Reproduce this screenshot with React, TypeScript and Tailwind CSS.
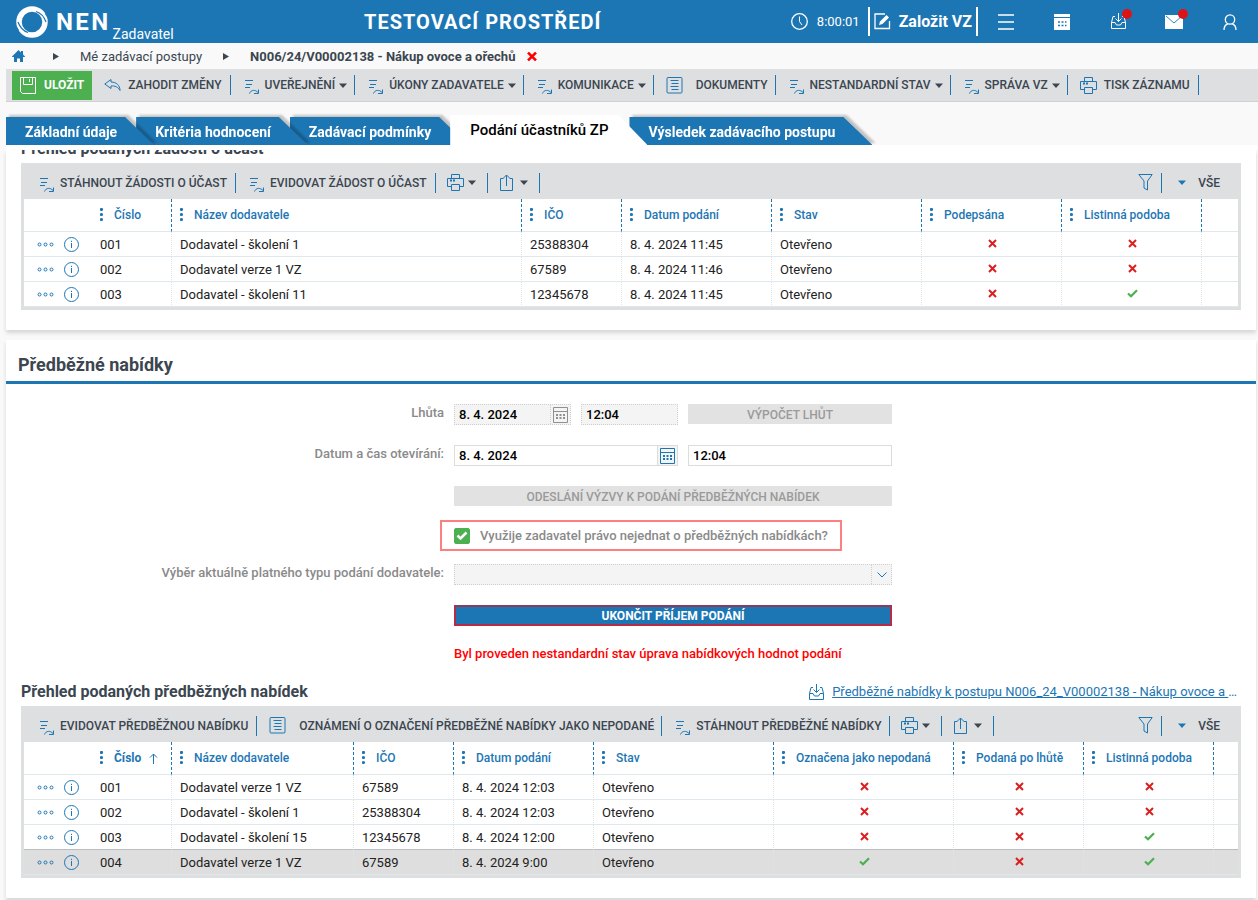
import { useState, type ReactNode } from "react";
import clsx from "clsx";

/* ---------- ICONS ---------- */

function Logo() {
  return (
    <svg width="32" height="32" viewBox="0 0 32 32" aria-hidden="true">
      <circle cx="16" cy="16" r="13" fill="none" stroke="#fff" strokeWidth="5.500" />
      <path d="M20 5.500C25 7 28 10.500 30 16M12 26.500C7 25 4 21.500 2 16" fill="none" stroke="#1d76b4" strokeWidth="1.200" />
      <path d="M28.500 4.500L32.500 13L29.500 9ZM3.500 27.500L-0.500 19L2.500 23Z" fill="#1d76b4" />
    </svg>
  );
}

function ActionIcon() {
  return (
    <svg width="14" height="18" viewBox="0 0 14 18" fill="none" stroke="#1d76b4" className="shrink-0" aria-hidden="true">
      <path d="M0 4.500H8M1 8.500H7M0 11.500H5" />
      <path d="M4.500 17.500C6 13.500 10.500 13.500 13 16.500M13.500 13.500V17.500H9" />
    </svg>
  );
}

function ListIcon() {
  return (
    <svg width="17" height="17" viewBox="0 0 17 17" fill="none" stroke="#1d76b4" className="shrink-0" aria-hidden="true">
      <rect x="1" y="0.500" width="15" height="15.500" rx="1" />
      <path d="M4.500 3.500H12.500M5.500 6.500H12.500M4.500 9.500H12.500M5.500 12.500H12.500" />
    </svg>
  );
}

function PrinterIcon() {
  return (
    <svg width="17" height="17" viewBox="0 0 17 17" fill="none" stroke="#1d76b4" className="shrink-0" aria-hidden="true">
      <path d="M4.500 4.500V0.500H12.500V4.500M4.500 12.500H0.500V4.500H16.500V12.500H12.500M4.500 10.500H12.500V16.500H4.500Z" />
      <path d="M3 6.500H5M6 6.500H8" strokeWidth="2" />
    </svg>
  );
}

function ShareIcon() {
  return (
    <svg width="15" height="17" viewBox="0 0 15 17" fill="none" stroke="#1d76b4" className="shrink-0" aria-hidden="true">
      <path d="M4.500 4.500H1.500V16.500H13.500V4.500H10.500M7.500 12V1M4.500 4L7.500 1L10.500 4" />
    </svg>
  );
}

function UndoIcon() {
  return (
    <svg width="17" height="14" viewBox="0 0 17 14" fill="none" stroke="#1d76b4" strokeLinejoin="round" className="shrink-0" aria-hidden="true">
      <path d="M7 1.500L0.800 6L7 10.500V8C11 7.500 14 9 16 12.500C16 7.500 12.500 4 7 4Z" />
    </svg>
  );
}

function SaveIcon() {
  return (
    <svg width="18" height="17" viewBox="0 0 18 17" fill="none" stroke="#fff" className="shrink-0" aria-hidden="true">
      <path d="M1.500 0.500H16.500V16.500H3.500L1.500 14.500ZM4.500 0.500V7.500H13.500V0.500" />
      <path d="M10.500 2V5M4.500 0.500H13.500" />
    </svg>
  );
}

function FunnelIcon() {
  return (
    <svg width="15" height="17" viewBox="0 0 15 17" fill="none" stroke="#1d76b4" aria-hidden="true">
      <path d="M0.800 0.500H14.200L9.500 7V16L6 14V7Z" />
    </svg>
  );
}

function Caret({ blue }: { blue?: boolean }) {
  return (
    <svg width="8" height="5" viewBox="0 0 8 5" fill={blue ? "#1d76b4" : "#3b4650"} className="shrink-0" aria-hidden="true">
      <path d="M0 0.500H8L4 5Z" />
    </svg>
  );
}

function InboxIcon() {
  return (
    <svg width="17" height="17" viewBox="0 0 17 17" fill="none" stroke="currentColor" className="shrink-0" aria-hidden="true">
      <path d="M5 3.500H3L1.500 9.500M12 3.500H14L15.500 9.500M1.500 9.500H5L6.500 12H10.500L12 9.500H15.500V15.500H1.500ZM8.500 0V8.500M5.500 5.500L8.500 8.500L11.500 5.500" />
    </svg>
  );
}

function CalendarIcon() {
  return (
    <svg width="15" height="16" viewBox="0 0 15 16" fill="none" stroke="currentColor" aria-hidden="true">
      <path d="M0.500 0.500H14.500V15.500H0.500ZM0.500 4.500H14.500" />
      <path d="M3 8H5M6.500 8H8.500M10 8H12M3 11H5M6.500 11H8.500M10 11H12" strokeWidth="2" />
    </svg>
  );
}

function Cross() {
  return (
    <svg width="9" height="9" viewBox="0 0 9 9" fill="none" stroke="#d9201f" strokeWidth="2" className="mx-auto mb-[2px]" role="img" aria-label="Ne">
      <path d="M1 1L8 8M8 1L1 8" />
    </svg>
  );
}

function Check() {
  return (
    <svg width="11" height="9" viewBox="0 0 11 9" fill="none" stroke="#4caf50" strokeWidth="2.200" className="mx-auto mb-[2px]" role="img" aria-label="Ano">
      <path d="M1 4.500L4 7.300L10 1.300" />
    </svg>
  );
}

/* ---------- TOOLBAR ---------- */

type ActionKind = "action" | "list" | "print" | "undo";

function ToolbarItem({ kind, label, menu }: { kind: ActionKind; label: string; menu?: boolean }) {
  return (
    <button
      type="button"
      className={clsx(
        "flex h-5 shrink-0 items-center whitespace-nowrap border-r border-[#1d76b4] text-xs font-medium text-[#3b4650]",
        menu || kind === "list" ? "pr-[7px]" : "pr-2",
        kind === "action" ? "gap-[6px] pl-[14px]" : "pl-3",
        kind === "list" && "gap-[13px]",
        (kind === "print" || kind === "undo") && "gap-[7px]"
      )}
    >
      {kind === "action" && <ActionIcon />}
      {kind === "list" && <ListIcon />}
      {kind === "print" && <PrinterIcon />}
      {kind === "undo" && <UndoIcon />}
      <span className="flex items-center gap-1">
        {label}
        {menu && <Caret />}
      </span>
    </button>
  );
}

function IconMenu({ label, children }: { label: string; children: ReactNode }) {
  return (
    <button
      type="button"
      aria-label={label}
      className="flex h-5 w-[52px] shrink-0 items-center justify-between border-r border-[#1d76b4] pr-[11px] pl-[11px]"
    >
      {children}
      <Caret />
    </button>
  );
}

/* ---------- DATA GRID ---------- */

type Column = { title: string; width: string; sorted?: boolean };
type Row = { cells: (string | boolean)[]; selected?: boolean };

function GridToolbar({ items }: { items: { kind: ActionKind; label: string }[] }) {
  return (
    <div className="flex h-9 items-center justify-between pt-[3px] pr-[18px] pl-[2px]">
      <div className="flex items-center">
        {items.map((item) => (
          <ToolbarItem key={item.label} {...item} />
        ))}
        <IconMenu label="Tisk">
          <PrinterIcon />
        </IconMenu>
        <IconMenu label="Export">
          <ShareIcon />
        </IconMenu>
      </div>
      <div className="flex items-center">
        <button type="button" aria-label="Filtr" className="flex h-5 items-center border-r border-[#1d76b4] pr-2">
          <FunnelIcon />
        </button>
        <button type="button" className="flex items-center gap-3 pl-4 text-xs font-medium text-[#3b4650]">
          <Caret blue />
          VŠE
        </button>
      </div>
    </div>
  );
}

function DataGrid({ columns, rows }: { columns: Column[]; rows: Row[] }) {
  return (
    <table className="w-full table-fixed border-separate border-spacing-0 bg-white text-[13px] leading-4">
      <colgroup>
        <col className="w-[68px]" />
        {columns.map((c) => (
          <col key={c.title} className={c.width} />
        ))}
        <col />
      </colgroup>
      <thead>
        <tr className="h-[33px]">
          <th className="border-b border-[#dfe8ed] p-0" />
          {columns.map((c) => (
            <th
              key={c.title}
              scope="col"
              className="border-r border-b border-r-[#1d76b4] border-b-[#dfe8ed] p-0 pl-2 text-left text-xs font-medium text-[#1d76b4] [border-right-style:dashed]"
            >
              <span className="flex items-center gap-[10px] whitespace-nowrap">
                <svg width="4" height="14" viewBox="0 0 4 14" fill="#1d76b4" className="shrink-0" aria-hidden="true">
                  <circle cx="1.500" cy="1.500" r="1.600" />
                  <circle cx="1.500" cy="6.500" r="1.600" />
                  <circle cx="1.500" cy="11.500" r="1.600" />
                </svg>
                <span className={clsx("flex items-center gap-2", c.sorted && "font-bold")}>
                  {c.title}
                  {c.sorted && (
                    <svg width="9" height="11" viewBox="0 0 9 11" fill="none" stroke="#1d76b4" aria-hidden="true">
                      <path d="M4.500 11V1M1 4.500L4.500 1L8 4.500" />
                    </svg>
                  )}
                </span>
              </span>
            </th>
          ))}
          <th className="border-b border-[#dfe8ed] p-0" />
        </tr>
      </thead>
      <tbody>
        {rows.map((row, i) => (
          <tr key={i} className={clsx("h-[25px] text-[#222]", row.selected && "bg-[#dedede]")}>
            <td className={clsx("border-b p-0 pl-[13px]", rows[i + 1]?.selected ? "border-[#b9bdc0]" : "border-[#dfe8ed]")}>
              <span className="flex items-center gap-[10px]">
                <button type="button" aria-label="Další akce">
                  <svg width="17" height="5" viewBox="0 0 17 5" fill="none" stroke="#1d76b4">
                    <circle cx="2.500" cy="2.500" r="1.500" />
                    <circle cx="8.500" cy="2.500" r="1.500" />
                    <circle cx="14.500" cy="2.500" r="1.500" />
                  </svg>
                </button>
                <button type="button" aria-label="Detail">
                  <svg width="15" height="15" viewBox="0 0 15 15" fill="none" stroke="#1d76b4">
                    <circle cx="7.500" cy="7.500" r="7" />
                    <path d="M7.500 6V11M7.500 3.800V5" />
                  </svg>
                </button>
              </span>
            </td>
            {row.cells.map((cell, j) => (
              <td
                key={j}
                className={clsx(
                  "border-r border-b p-0 border-r-[#e0e4e7] [border-right-style:dotted]",
                  rows[i + 1]?.selected ? "border-b-[#b9bdc0]" : "border-b-[#dfe8ed]",
                  typeof cell === "string" ? "truncate pt-[2px] pl-2" : "pl-[2px]"
                )}
              >
                {typeof cell === "string" ? cell : cell ? <Check /> : <Cross />}
              </td>
            ))}
            <td className={clsx("border-b p-0", rows[i + 1]?.selected ? "border-[#b9bdc0]" : "border-[#dfe8ed]")} />
          </tr>
        ))}
      </tbody>
    </table>
  );
}

const REQUEST_COLUMNS: Column[] = [
  { title: "Číslo", width: "w-[80px]" },
  { title: "Název dodavatele", width: "w-[350px]" },
  { title: "IČO", width: "w-[100px]" },
  { title: "Datum podání", width: "w-[150px]" },
  { title: "Stav", width: "w-[150px]" },
  { title: "Podepsána", width: "w-[140px]" },
  { title: "Listinná podoba", width: "w-[140px]" },
];

const REQUEST_ROWS: Row[] = [
  { cells: ["001", "Dodavatel - školení 1", "25388304", "8. 4. 2024 11:45", "Otevřeno", false, false] },
  { cells: ["002", "Dodavatel verze 1 VZ", "67589", "8. 4. 2024 11:46", "Otevřeno", false, false] },
  { cells: ["003", "Dodavatel - školení 11", "12345678", "8. 4. 2024 11:45", "Otevřeno", false, true] },
];

const OFFER_COLUMNS: Column[] = [
  { title: "Číslo", width: "w-[80px]", sorted: true },
  { title: "Název dodavatele", width: "w-[182px]" },
  { title: "IČO", width: "w-[100px]" },
  { title: "Datum podání", width: "w-[140px]" },
  { title: "Stav", width: "w-[180px]" },
  { title: "Označena jako nepodaná", width: "w-[180px]" },
  { title: "Podaná po lhůtě", width: "w-[130px]" },
  { title: "Listinná podoba", width: "w-[130px]" },
];

const OFFER_ROWS: Row[] = [
  { cells: ["001", "Dodavatel verze 1 VZ", "67589", "8. 4. 2024 12:03", "Otevřeno", false, false, false] },
  { cells: ["002", "Dodavatel - školení 1", "25388304", "8. 4. 2024 12:03", "Otevřeno", false, false, false] },
  { cells: ["003", "Dodavatel - školení 15", "12345678", "8. 4. 2024 12:00", "Otevřeno", false, false, true] },
  { cells: ["004", "Dodavatel verze 1 VZ", "67589", "8. 4. 2024 9:00", "Otevřeno", true, false, true], selected: true },
];

/* ---------- HEADER ---------- */

function Header() {
  return (
    <header className="flex h-[43px] items-center justify-between bg-[#1d76b4] pl-4 text-white">
      <a href="#" className="flex h-full w-[348px] items-center">
        <Logo />
        <span className="pl-2 text-2xl font-bold tracking-widest">NEN</span>
        <span className="self-end pb-px pl-[2px] text-sm leading-4">Zadavatel</span>
      </a>
      <h1 className="grow text-xl font-bold tracking-wider whitespace-nowrap">TESTOVACÍ PROSTŘEDÍ</h1>
      <div className="flex items-center">
        <span className="flex items-center gap-[9px] pr-2 text-[13px]">
          <svg width="17" height="17" viewBox="0 0 17 17" fill="none" stroke="#fff" aria-hidden="true">
            <circle cx="8.500" cy="8.500" r="7.800" strokeWidth="1.300" />
            <path d="M8.500 3.500V8.500L11 12" />
          </svg>
          8:00:01
        </span>
        <button type="button" className="flex h-[29px] items-center gap-2 border-x-2 border-white px-1 text-base font-bold">
          <svg width="17" height="17" viewBox="0 0 17 17" fill="none" stroke="#fff" aria-hidden="true">
            <path d="M11 1H1V15.500H15.500V8" strokeWidth="1.300" />
            <path d="M5 12L6 8.500L12.500 2L15 4.500L8.500 11Z" fill="#fff" stroke="none" />
          </svg>
          Založit VZ
        </button>
        <button type="button" aria-label="Menu" className="flex w-14 justify-center">
          <svg width="16" height="16" viewBox="0 0 16 16" fill="none" stroke="#fff" strokeWidth="1.600">
            <path d="M0 1H16M0 8H16M0 15H16" />
          </svg>
        </button>
        <button type="button" aria-label="Kalendář" className="flex w-14 justify-center">
          <svg width="16" height="16" viewBox="0 0 16 16">
            <path d="M0 0H16V3H0ZM0 4H16V16H0Z" fill="#fff" />
            <path d="M4 8H12.500M4 11.500H12.500" stroke="#1d76b4" strokeWidth="1.500" strokeDasharray="2 1.500" />
          </svg>
        </button>
        <button type="button" aria-label="Doručené" className="flex w-14 justify-center">
          <span className="relative">
            <InboxIcon />
            <span className="absolute -top-1 left-3 size-[10px] rounded-full bg-[#dc1418]" />
          </span>
        </button>
        <button type="button" aria-label="Zprávy" className="flex w-14 justify-center">
          <span className="relative">
            <svg width="18" height="14" viewBox="0 0 18 14">
              <path d="M0 0H18V14H0Z" fill="#fff" />
              <path d="M1 1L9 8L17 1" fill="none" stroke="#1d76b4" strokeWidth="0.900" />
            </svg>
            <span className="absolute -top-[6px] left-[13px] size-[10px] rounded-full bg-[#dc1418]" />
          </span>
        </button>
        <button type="button" aria-label="Uživatel" className="flex w-14 justify-center">
          <svg width="14" height="16" viewBox="0 0 14 16" fill="none" stroke="#fff" strokeWidth="1.300">
            <circle cx="7" cy="5.500" r="4.700" />
            <path d="M1 16C1 12 3 10.500 5 9.700M13 16C13 12 11 10.500 9 9.700" />
          </svg>
        </button>
      </div>
    </header>
  );
}

function Breadcrumbs() {
  const arrow = (
    <svg width="6" height="7" viewBox="0 0 6 7" fill="#3b4650" aria-hidden="true">
      <path d="M0 0L6 3.500L0 7Z" />
    </svg>
  );
  return (
    <nav className="flex h-[26px] items-center pt-px pl-3 text-[13px] whitespace-nowrap text-[#3b4650]">
      <a href="#" aria-label="Domů" className="pr-7">
        <svg width="13" height="13" viewBox="0 0 13 13" fill="#1d76b4">
          <path d="M6.500 0L9 2.500V1H11V4.500L13 6.500V7H11V12H8V8.500H5V12H2V7H0V6.500Z" />
        </svg>
      </a>
      {arrow}
      <a href="#" className="pr-[21px] pl-[21px]">Mé zadávací postupy</a>
      {arrow}
      <a href="#" className="pr-3 pl-[21px] font-bold">N006/24/V00002138 - Nákup ovoce a ořechů</a>
      <button type="button" aria-label="Zavřít">
        <svg width="10" height="9" viewBox="0 0 10 9" fill="none" stroke="#ff0000" strokeWidth="2.500">
          <path d="M1 0.500L9 8.500M9 0.500L1 8.500" />
        </svg>
      </button>
    </nav>
  );
}

const TABS = [
  "Základní údaje",
  "Kritéria hodnocení",
  "Zadávací podmínky",
  "Podání účastníků ZP",
  "Výsledek zadávacího postupu",
];
const TAB_LAYERS = ["z-40", "z-30", "z-20", "z-50", "z-10"];

function Tabs() {
  const [active, setActive] = useState(3);
  return (
    <div role="tablist" className="isolate flex h-[43px] items-end overflow-hidden pl-[6px]">
      {TABS.map((tab, i) => (
        <div
          key={tab}
          className={clsx(
            "relative",
            i > 0 && "-ml-[18px]",
            i === active ? "z-50" : [TAB_LAYERS[i], "drop-shadow-[3px_-2px_1px_rgba(0,0,0,0.22)]"]
          )}
        >
          <button
            type="button"
            role="tab"
            aria-selected={i === active}
            onClick={() => setActive(i)}
            className={clsx(
              "block whitespace-nowrap [clip-path:polygon(0_0,calc(100%-29px)_0,100%_100%,0_100%)]",
              i === active
                ? "h-[30px] bg-white pr-[39px] pl-5 text-[15px] font-medium text-black"
                : "h-7 bg-[#1d76b4] pt-[2px] pr-[37px] pl-[19px] text-sm font-bold text-white"
            )}
          >
            {tab}
          </button>
        </div>
      ))}
    </div>
  );
}

/* ---------- FORM ---------- */

const readOnlyField = "border border-dotted border-[#cfcfcf] bg-[#f4f4f4]";
const editableField = "border border-[#dcdcdc] bg-white";

function FormRow({ label, htmlFor, children }: { label?: string; htmlFor?: string; children: ReactNode }) {
  return (
    <div className="flex gap-[10px]">
      <div className="w-[438px] shrink-0 text-right text-[13px] leading-[18px] font-medium text-[#8a8a8a]">
        {label && <label htmlFor={htmlFor}>{label}</label>}
      </div>
      <div className="flex w-[438px] gap-[10px]">{children}</div>
    </div>
  );
}

function DateField({ id, disabled, width }: { id: string; disabled?: boolean; width: string }) {
  return (
    <div className={clsx("flex h-[21px]", width, disabled ? readOnlyField : editableField)}>
      <input id={id} defaultValue="8. 4. 2024" disabled={disabled} className="min-w-0 grow px-1 text-[13px] font-medium text-black" />
      <button
        type="button"
        aria-label="Vybrat datum"
        disabled={disabled}
        className={clsx(
          "flex w-5 shrink-0 items-center justify-center border-l bg-[#f4f4f4] pr-px",
          disabled ? "border-dotted border-[#cfcfcf] text-[#909090]" : "border-[#dcdcdc] text-[#1d76b4]"
        )}
      >
        <CalendarIcon />
      </button>
    </div>
  );
}

function OfferForm() {
  const [waive, setWaive] = useState(true);
  return (
    <form className="flex flex-col gap-5 pt-5">
      <FormRow label="Lhůta" htmlFor="lhuta">
        <DateField id="lhuta" disabled width="w-[117px]" />
        <input
          aria-label="Lhůta - čas"
          defaultValue="12:04"
          disabled
          className={clsx("h-[21px] w-[97px] px-1 text-[13px] font-medium text-black", readOnlyField)}
        />
        <button type="button" disabled className="h-5 grow bg-[#e2e2e2] pt-px text-xs font-medium text-[#9a9a9a]">
          VÝPOČET LHŮT
        </button>
      </FormRow>
      <FormRow label="Datum a čas otevírání:" htmlFor="otevirani">
        <DateField id="otevirani" width="w-[224px]" />
        <input
          aria-label="Čas otevírání"
          defaultValue="12:04"
          className={clsx("h-[21px] w-[204px] px-1 text-[13px] font-medium text-black", editableField)}
        />
      </FormRow>
      <FormRow>
        <button type="button" disabled className="mb-px h-5 grow bg-[#e2e2e2] pt-px text-xs font-medium text-[#9a9a9a]">
          ODESLÁNÍ VÝZVY K PODÁNÍ PŘEDBĚŽNÝCH NABÍDEK
        </button>
      </FormRow>
      <FormRow>
        <label className="relative flex h-[17px] items-center gap-[10px] text-[13px] font-medium whitespace-nowrap text-[#8a8a8a]">
          <input
            type="checkbox"
            checked={waive}
            onChange={(e) => setWaive(e.target.checked)}
            className="peer size-4 appearance-none rounded-xs border border-[#4caf50] checked:bg-[#4caf50]"
          />
          <svg width="12" height="10" viewBox="0 0 12 10" fill="none" stroke="#fff" strokeWidth="2.500" className="pointer-events-none absolute top-1 left-[2px]" aria-hidden="true">
            <path d="M1.500 4.500L4.500 7.500L10.500 1.500" />
          </svg>
          Využije zadavatel právo nejednat o předběžných nabídkách?
          <span className="pointer-events-none absolute -inset-x-[14px] -inset-y-[7px] border-2 border-[#ff7f7f]" />
        </label>
      </FormRow>
      <FormRow label="Výběr aktuálně platného typu podání dodavatele:" htmlFor="typ">
        <div className={clsx("relative h-[21px] grow", readOnlyField)}>
          <select id="typ" disabled className="h-full w-full appearance-none" />
          <span className="pointer-events-none absolute inset-y-0 right-0 flex w-5 items-center justify-center border-l border-dotted border-[#cfcfcf]">
            <svg width="10" height="6" viewBox="0 0 10 6" fill="none" stroke="#1d76b4" aria-hidden="true">
              <path d="M0.500 0.500L5 5L9.500 0.500" />
            </svg>
          </span>
        </div>
      </FormRow>
      <FormRow>
        <button type="button" className="h-[21px] grow border-2 border-[#b82a45] border-t-[#8e3a5c] bg-[#1d76b4] text-xs leading-4 font-bold text-white">
          UKONČIT PŘÍJEM PODÁNÍ
        </button>
      </FormRow>
      <FormRow>
        <p className="-mb-1 text-[13px] leading-4 font-medium whitespace-nowrap text-[#ff0000]">
          Byl proveden nestandardní stav úprava nabídkových hodnot podání
        </p>
      </FormRow>
    </form>
  );
}

export default function App() {
  return (
    <div className="min-h-screen bg-[#f9f9f9] pb-[2px] font-['Roboto',sans-serif]">
      <Header />
      <Breadcrumbs />

      {/* HLAVNÍ LIŠTA AKCÍ */}
      <div className="ml-[6px] flex h-[33px] items-center border-b border-[#d0d1d3] bg-[#dedfe1] pl-[6px]">
        <button type="button" className="flex h-[29px] items-center gap-[7px] bg-[#4caf50] pr-2 pl-[7px] text-xs font-bold text-white">
          <SaveIcon />
          ULOŽIT
        </button>
        <ToolbarItem kind="undo" label="ZAHODIT ZMĚNY" />
        <ToolbarItem kind="action" label="UVEŘEJNĚNÍ" menu />
        <ToolbarItem kind="action" label="ÚKONY ZADAVATELE" menu />
        <ToolbarItem kind="action" label="KOMUNIKACE" menu />
        <ToolbarItem kind="list" label="DOKUMENTY" />
        <ToolbarItem kind="action" label="NESTANDARDNÍ STAV" menu />
        <ToolbarItem kind="action" label="SPRÁVA VZ" menu />
        <ToolbarItem kind="print" label="TISK ZÁZNAMU" />
      </div>

      <Tabs />

      <main className="ml-[6px]">
        <div className="h-[5px] bg-white" />

        {/* ŽÁDOSTI O ÚČAST */}
        <section className="mr-[2px] bg-white px-[15px] pb-5 shadow-[0_3px_4px_rgba(0,0,0,0.14)]">
          <div className="flex h-[13px] items-end overflow-hidden">
            <h2 className="text-base leading-7 font-bold text-[#3b4650]">Přehled podaných žádostí o účast</h2>
          </div>
          <div className="border-x-[3px] border-b-[3px] border-[#dedfe1] bg-[#dedfe1]">
            <GridToolbar
              items={[
                { kind: "action", label: "STÁHNOUT ŽÁDOSTI O ÚČAST" },
                { kind: "action", label: "EVIDOVAT ŽÁDOST O ÚČAST" },
              ]}
            />
            <DataGrid columns={REQUEST_COLUMNS} rows={REQUEST_ROWS} />
          </div>
        </section>

        {/* PŘEDBĚŽNÉ NABÍDKY */}
        <section className="mt-[10px] mr-[2px] bg-white pb-5 shadow-[0_3px_4px_rgba(0,0,0,0.14)]">
          <h2 className="border-b-[3px] border-[#1d76b4] pt-[11px] pb-[2px] pl-3 text-lg leading-7 font-bold text-[#3b4650]">
            Předběžné nabídky
          </h2>
          <OfferForm />
          <div className="px-[15px] pt-5">
            <div className="flex h-7 items-center justify-between pr-1">
              <h3 className="text-base font-bold text-[#3b4650]">Přehled podaných předběžných nabídek</h3>
              <a href="#" className="flex items-center gap-[7px] text-[13px] whitespace-nowrap text-[#1d76b4]">
                <InboxIcon />
                <span>
                  <span className="underline">Předběžné nabídky k postupu N006_24_V00002138 - Nákup ovoce a </span>…
                </span>
              </a>
            </div>
            <div className="border-x-[3px] border-b-[3px] border-[#dedfe1] bg-[#dedfe1]">
              <GridToolbar
                items={[
                  { kind: "action", label: "EVIDOVAT PŘEDBĚŽNOU NABÍDKU" },
                  { kind: "list", label: "OZNÁMENÍ O OZNAČENÍ PŘEDBĚŽNÉ NABÍDKY JAKO NEPODANÉ" },
                  { kind: "action", label: "STÁHNOUT PŘEDBĚŽNÉ NABÍDKY" },
                ]}
              />
              <DataGrid columns={OFFER_COLUMNS} rows={OFFER_ROWS} />
            </div>
          </div>
        </section>
      </main>
    </div>
  );
}
